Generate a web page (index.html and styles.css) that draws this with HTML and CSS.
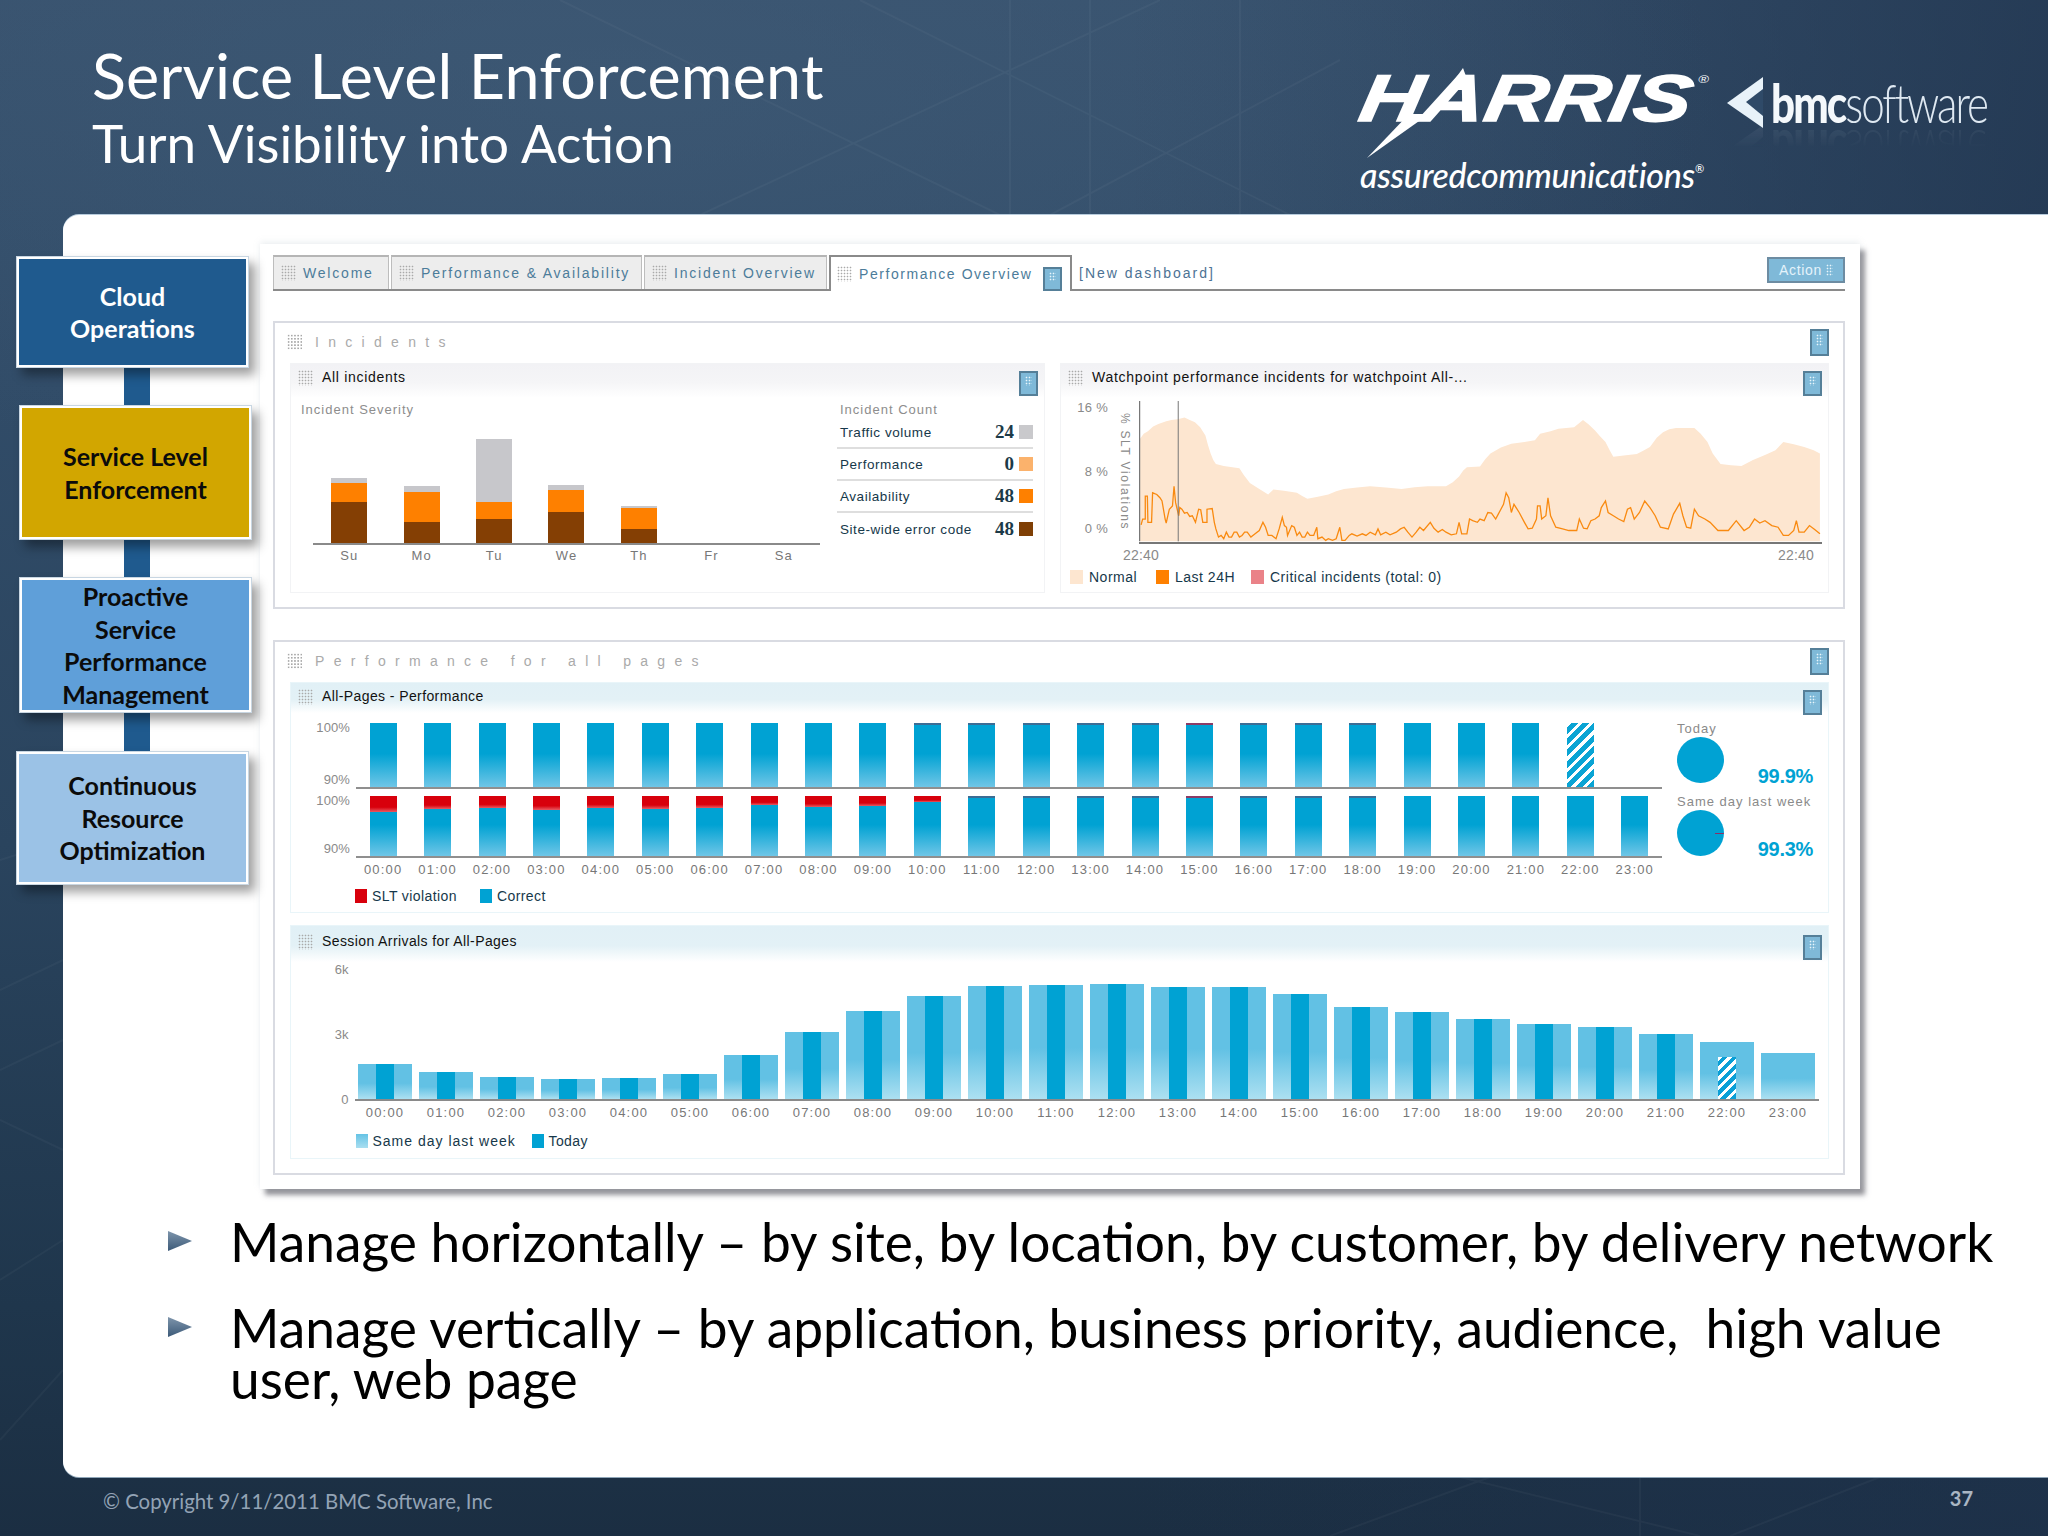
FILE: index.html
```html
<!DOCTYPE html>
<html lang="en">
<head>
<meta charset="utf-8">
<title>Service Level Enforcement</title>
<link rel="stylesheet" href="styles.css">
</head>
<body>
<div class="slide">
  <svg class="texture" viewBox="0 0 2048 1536" aria-hidden="true">
    <g fill="none" stroke="#fff" stroke-opacity=".035" stroke-width="2">
      <path d="M700 215L1160 0M860 0L1290 215M1050 215L1340 60M560 0L1000 215M1010 0V215M1090 0V215M1240 0V215"/>
      <path d="M0 860L63 840M0 990L63 960M0 1070L63 1040M0 1120L63 1150M0 1280L63 1240M0 1440L63 1370"/>
      <path d="M1330 1536L1490 1477M1460 1477L1700 1536M1640 1477V1536M1730 1536L1880 1477"/>
    </g>
  </svg>

  <header class="header">
    <div class="titles">
      <h1 class="title">Service Level Enforcement</h1>
      <p class="subtitle">Turn Visibility into Action</p>
    </div>
    <div class="logos">
      <div class="harris">
        <div class="harris-word">HARRIS<sup class="reg">®</sup></div>
        <svg class="bolt" viewBox="0 0 110 98" aria-hidden="true"><polygon points="0,98 42,54 62,54" fill="#fff"/><polygon points="96,8 80,30 104,30" fill="#fff"/></svg>
        <div class="assured">assuredcommunications<sup class="reg-small">®</sup></div>
      </div>
      <div class="bmc">
        <svg class="bmc-mark" viewBox="0 0 36 51" aria-hidden="true"><polygon points="0,26 36,0 36,51" fill="#e8f2f9"/><polygon points="19,25 36,12 36,39" fill="#2f4a68"/></svg>
        <div class="bmc-word"><b>bmc</b>software</div>
      </div>
    </div>
  </header>

  <main class="panel">
    <div class="top-row">
      <nav class="stack">
        <div class="step step-cloud"><span>Cloud<br>Operations</span></div>
        <div class="link link-a"></div>
        <div class="step step-sle step-in"><span>Service Level<br>Enforcement</span></div>
        <div class="link link-a"></div>
        <div class="step step-psp step-in"><span>Proactive<br>Service<br>Performance<br>Management</span></div>
        <div class="link link-b"></div>
        <div class="step step-cro"><span>Continuous<br>Resource<br>Optimization</span></div>
      </nav>

      <section class="card">
        <div class="tabs">
          <div class="tab t1"><i class="grip"></i>Welcome</div>
          <div class="tab t2"><i class="grip"></i>Performance &amp; Availability</div>
          <div class="tab t3"><i class="grip"></i>Incident Overview</div>
          <div class="tab tab-on"><i class="grip"></i>Performance Overview<i class="menu menu-tab"></i></div>
          <div class="newdash">[New dashboard]</div>
          <div class="action">Action<i class="action-grip"></i></div>
        </div>

        <section class="box box-inc">
          <div class="box-title"><i class="grip grip-big"></i><span>Incidents</span><i class="menu menu-box"></i></div>
          <div class="sub-row">
            <article class="sub sub-all">
              <div class="sub-head"><i class="grip"></i><span>All incidents</span><i class="menu"></i></div>
              <div class="all-body">
                <div class="sev">
                  <div class="cap-label">Incident Severity</div>
                  <div class="sev-plot">
                    <div class="sev-bar"><i class="sg" style="height:5px"></i><i class="so" style="height:19px"></i><i class="sb" style="height:41px"></i></div>
                    <div class="sev-bar"><i class="sg" style="height:6px"></i><i class="so" style="height:30px"></i><i class="sb" style="height:21px"></i></div>
                    <div class="sev-bar"><i class="sg" style="height:63px"></i><i class="so" style="height:17px"></i><i class="sb" style="height:24px"></i></div>
                    <div class="sev-bar"><i class="sg" style="height:5px"></i><i class="so" style="height:22px"></i><i class="sb" style="height:31px"></i></div>
                    <div class="sev-bar"><i class="sg" style="height:2px"></i><i class="so" style="height:21px"></i><i class="sb" style="height:14px"></i></div>
                    <div class="sev-bar"></div>
                    <div class="sev-bar"></div>
                  </div>
                  <div class="sev-days"><span>Su</span><span>Mo</span><span>Tu</span><span>We</span><span>Th</span><span>Fr</span><span>Sa</span></div>
                </div>
                <div class="count">
                  <div class="cap-label cap-count">Incident Count</div>
                  <div class="count-row"><span>Traffic volume</span><b>24</b><i class="sq sq-g"></i></div>
                  <div class="count-row"><span>Performance</span><b>0</b><i class="sq sq-l"></i></div>
                  <div class="count-row"><span>Availability</span><b>48</b><i class="sq sq-o"></i></div>
                  <div class="count-row"><span>Site-wide error code</span><b>48</b><i class="sq sq-b"></i></div>
                </div>
              </div>
            </article>

            <article class="sub sub-watch">
              <div class="sub-head"><i class="grip"></i><span>Watchpoint performance incidents for watchpoint All-...</span><i class="menu"></i></div>
              <div class="watch-body">
                <div class="watch-y"><span>16 %</span><span>8 %</span><span>0 %</span></div>
                <div class="watch-rot">% SLT Violations</div>
                <div class="watch-plot">
                  <svg class="watch-svg" viewBox="188 240 1306 430" preserveAspectRatio="none" aria-hidden="true">
                    <polygon fill="#fde6d0" points="190,355 197,340 205,332 215,318 225,310 240,302 250,298 262,296 275,290 285,298 295,305 305,320 315,345 320,375 325,400 330,420 335,432 350,438 380,445 388,465 400,490 415,505 435,525 445,510 465,514 490,520 500,530 510,538 530,532 550,525 565,515 580,508 605,504 630,500 660,504 690,508 715,503 740,500 775,500 788,488 800,470 808,452 815,442 840,440 850,418 860,400 880,382 900,370 925,365 945,360 955,340 975,332 990,325 1020,320 1037,298 1048,312 1060,330 1070,348 1080,365 1088,390 1095,410 1115,406 1140,402 1152,392 1165,380 1178,352 1190,335 1202,326 1215,322 1250,322 1262,340 1275,365 1285,400 1300,432 1320,436 1340,438 1362,420 1385,405 1405,390 1420,365 1440,372 1460,380 1478,390 1490,400 1490,668 190,668"/>
                    <polyline fill="none" stroke="#f98a10" stroke-width="1.3" vector-effect="non-scaling-stroke" points="192,618 195,600 200,600 200,530 204,530 205,610 212,610 214,520 222,525 228,535 232,545 238,600 240,612 246,570 252,560 255,500 258,550 264,590 266,565 270,570 275,582 280,580 285,592 290,590 296,610 302,570 306,572 310,610 318,610 318,570 328,568 332,610 335,630 340,655 345,650 350,660 355,640 360,655 365,655 370,640 375,640 380,655 385,650 390,640 395,640 402,655 410,645 418,635 425,610 430,625 435,650 442,650 450,660 456,630 462,595 466,620 470,625 472,650 480,620 485,625 490,650 495,640 500,655 505,655 510,640 515,650 522,650 528,625 530,660 538,655 545,665 550,660 558,665 565,660 572,625 576,665 582,665 590,650 595,645 605,652 615,645 622,650 630,640 640,648 645,630 650,648 660,640 668,648 680,640 688,630 695,625 702,640 710,655 718,640 725,625 732,635 745,610 752,628 760,640 768,632 775,640 785,648 795,645 800,610 805,645 815,645 820,600 826,605 835,610 840,600 848,605 855,580 862,582 870,600 875,585 880,570 885,555 890,520 895,535 900,580 905,555 915,580 925,610 932,630 940,628 948,600 950,560 955,560 958,600 966,590 970,535 975,590 985,625 998,630 1010,635 1025,635 1030,600 1038,628 1045,630 1052,605 1060,600 1068,590 1072,565 1080,545 1085,580 1095,590 1105,600 1115,608 1122,570 1128,565 1135,600 1145,580 1155,545 1165,565 1175,590 1185,625 1200,630 1210,585 1222,552 1228,590 1235,625 1243,628 1250,570 1258,590 1270,600 1280,610 1295,635 1315,635 1330,605 1345,635 1355,625 1365,600 1375,612 1385,605 1398,620 1410,625 1420,650 1430,650 1440,635 1445,605 1450,640 1460,640 1470,620 1480,632 1490,645"/>
                    <line x1="263" y1="240" x2="263" y2="668" stroke="#777" stroke-width="1" vector-effect="non-scaling-stroke"/>
                    <line x1="189" y1="240" x2="189" y2="668" stroke="#777" stroke-width="1.4" vector-effect="non-scaling-stroke"/>
                  </svg>
                  <div class="watch-times"><span>22:40</span><span>22:40</span></div>
                </div>
                <div class="watch-legend">
                  <i class="lg lg-n"></i><span class="lgt-n">Normal</span>
                  <i class="lg lg-l"></i><span class="lgt-l">Last 24H</span>
                  <i class="lg lg-c"></i><span>Critical incidents (total: 0)</span>
                </div>
              </div>
            </article>
          </div>
        </section>

        <section class="box box-perf">
          <div class="box-title"><i class="grip grip-big"></i><span>Performance for all pages</span><i class="menu menu-box"></i></div>

          <article class="sub sub-blue sub-perf">
            <div class="sub-head head-blue"><i class="grip"></i><span>All-Pages - Performance</span><i class="menu"></i></div>
            <div class="perf-body">
              <div class="perf-left">
                <div class="perf-chart perf-chart-1">
                  <div class="y2"><span>100%</span><span>90%</span></div>
                  <div class="pbars">
                    <div class="pbar"></div><div class="pbar"></div><div class="pbar"></div><div class="pbar"></div><div class="pbar"></div><div class="pbar"></div>
                    <div class="pbar"></div><div class="pbar"></div><div class="pbar"></div><div class="pbar"></div>
                    <div class="pbar"><i class="dark"></i></div><div class="pbar"><i class="dark"></i></div><div class="pbar"><i class="dark"></i></div><div class="pbar"><i class="dark"></i></div><div class="pbar"><i class="dark"></i></div>
                    <div class="pbar"><i class="dark dark-r"></i></div><div class="pbar"><i class="dark"></i></div><div class="pbar"><i class="dark"></i></div><div class="pbar"><i class="dark"></i></div>
                    <div class="pbar"></div><div class="pbar"></div><div class="pbar"></div>
                    <div class="pbar hatch"></div><div class="pbar-none"></div>
                  </div>
                </div>
                <div class="perf-chart perf-chart-2">
                  <div class="y2"><span>100%</span><span>90%</span></div>
                  <div class="pbars">
                    <div class="pbar"><i class="viol" style="height:16px"></i></div><div class="pbar"><i class="viol" style="height:13px"></i></div><div class="pbar"><i class="viol" style="height:12px"></i></div><div class="pbar"><i class="viol" style="height:14px"></i></div><div class="pbar"><i class="viol" style="height:12px"></i></div><div class="pbar"><i class="viol" style="height:13px"></i></div>
                    <div class="pbar"><i class="viol" style="height:12px"></i></div><div class="pbar"><i class="viol" style="height:9px"></i></div><div class="pbar"><i class="viol" style="height:11px"></i></div><div class="pbar"><i class="viol" style="height:10px"></i></div><div class="pbar"><i class="viol" style="height:6px"></i></div>
                    <div class="pbar"><i class="dark"></i></div><div class="pbar"><i class="dark"></i></div><div class="pbar"><i class="dark"></i></div><div class="pbar"><i class="dark"></i></div>
                    <div class="pbar"><i class="dark dark-r"></i></div><div class="pbar"><i class="dark"></i></div><div class="pbar"><i class="dark"></i></div><div class="pbar"><i class="dark"></i></div>
                    <div class="pbar"></div><div class="pbar"></div><div class="pbar"></div><div class="pbar"></div><div class="pbar"></div>
                  </div>
                </div>
                <div class="hours hours-p">
                  <span>00:00</span><span>01:00</span><span>02:00</span><span>03:00</span><span>04:00</span><span>05:00</span><span>06:00</span><span>07:00</span><span>08:00</span><span>09:00</span><span>10:00</span><span>11:00</span><span>12:00</span><span>13:00</span><span>14:00</span><span>15:00</span><span>16:00</span><span>17:00</span><span>18:00</span><span>19:00</span><span>20:00</span><span>21:00</span><span>22:00</span><span>23:00</span>
                </div>
                <div class="legend legend-p"><i class="lg lg-red"></i><span class="lgt-slt">SLT violation</span><i class="lg lg-cor"></i><span>Correct</span></div>
              </div>
              <div class="pies">
                <div class="pie-block">
                  <div class="pie-title">Today</div>
                  <div class="pie-row"><div class="pie"></div><div class="pie-val">99.9%</div></div>
                </div>
                <div class="pie-block pie-block-2">
                  <div class="pie-title">Same day last week</div>
                  <div class="pie-row"><div class="pie pie-w"></div><div class="pie-val">99.3%</div></div>
                </div>
              </div>
            </div>
          </article>

          <article class="sub sub-blue sub-sess">
            <div class="sub-head head-blue head-sess"><i class="grip"></i><span>Session Arrivals for All-Pages</span><i class="menu"></i></div>
            <div class="sess-body">
              <div class="y3"><span>6k</span><span>3k</span><span>0</span></div>
              <div class="sess-main">
                <div class="sbars">
                  <div class="sbar" style="height:35px"><i class="st"></i></div>
                  <div class="sbar" style="height:27px"><i class="st"></i></div>
                  <div class="sbar" style="height:22px"><i class="st"></i></div>
                  <div class="sbar" style="height:20px"><i class="st"></i></div>
                  <div class="sbar" style="height:21px"><i class="st"></i></div>
                  <div class="sbar" style="height:25px"><i class="st"></i></div>
                  <div class="sbar" style="height:44px"><i class="st"></i></div>
                  <div class="sbar" style="height:67px"><i class="st"></i></div>
                  <div class="sbar" style="height:88px"><i class="st"></i></div>
                  <div class="sbar" style="height:103px"><i class="st"></i></div>
                  <div class="sbar" style="height:113px"><i class="st"></i></div>
                  <div class="sbar" style="height:114px"><i class="st"></i></div>
                  <div class="sbar" style="height:115px"><i class="st"></i></div>
                  <div class="sbar" style="height:112px"><i class="st"></i></div>
                  <div class="sbar" style="height:112px"><i class="st"></i></div>
                  <div class="sbar" style="height:105px"><i class="st"></i></div>
                  <div class="sbar" style="height:92px"><i class="st"></i></div>
                  <div class="sbar" style="height:87px"><i class="st"></i></div>
                  <div class="sbar" style="height:80px"><i class="st"></i></div>
                  <div class="sbar" style="height:75px"><i class="st"></i></div>
                  <div class="sbar" style="height:72px"><i class="st"></i></div>
                  <div class="sbar" style="height:65px"><i class="st"></i></div>
                  <div class="sbar" style="height:57px"><i class="st st-h" style="height:42px"></i></div>
                  <div class="sbar" style="height:46px"></div>
                </div>
                <div class="hours hours-s">
                  <span>00:00</span><span>01:00</span><span>02:00</span><span>03:00</span><span>04:00</span><span>05:00</span><span>06:00</span><span>07:00</span><span>08:00</span><span>09:00</span><span>10:00</span><span>11:00</span><span>12:00</span><span>13:00</span><span>14:00</span><span>15:00</span><span>16:00</span><span>17:00</span><span>18:00</span><span>19:00</span><span>20:00</span><span>21:00</span><span>22:00</span><span>23:00</span>
                </div>
                <div class="legend legend-s"><i class="lg lg-lw"></i><span class="lgt-lw">Same day last week</span><i class="lg lg-cor"></i><span>Today</span></div>
              </div>
            </div>
          </article>
        </section>
      </section>
    </div>

    <ul class="bullets">
      <li>Manage horizontally – by site, by location, by customer, by delivery network</li>
      <li>Manage vertically – by application, business priority, audience,&nbsp; high value user, web page</li>
    </ul>
  </main>

  <footer class="footer">
    <span class="copy">© Copyright 9/11/2011 BMC Software, Inc</span>
    <span class="page">37</span>
  </footer>
</div>
</body>
</html>
```

FILE: styles.css
```css
* { box-sizing: border-box; }
html, body { margin: 0; padding: 0; }
body { width: 2048px; height: 1536px; overflow: hidden; font-family: "Liberation Sans", Arial, sans-serif; }
i { display: block; font-style: normal; }

.slide {
  position: relative;
  width: 2048px;
  height: 1536px;
  overflow: hidden;
  display: flex;
  flex-direction: column;
  background:
    radial-gradient(ellipse 1100px 420px at 620px 80px, rgba(64,92,120,.55) 0%, rgba(64,92,120,0) 100%),
    linear-gradient(90deg, rgba(30,50,76,0) 55%, rgba(30,50,76,.7) 100%),
    linear-gradient(180deg, #38526e 0%, #314c68 25%, #2a445e 55%, #1f364c 85%, #1b2e42 100%);
}
.texture { position: absolute; left: 0; top: 0; width: 2048px; height: 1536px; }

/* Header */
.header {
  position: relative;
  height: 215px;
  flex: none;
  display: flex;
  justify-content: space-between;
  padding: 0 63px 0 92px;
}
.titles { color: #fff; font-family: Lato, sans-serif; }
.title { margin: 39px 0 0; font-size: 62.8px; line-height: 72px; font-weight: 400; white-space: nowrap; letter-spacing: .2px; }
.subtitle { margin: 0; font-size: 53px; line-height: 64px; white-space: nowrap; }

.logos { display: flex; align-items: flex-start; color: #fff; }
.harris { position: relative; width: 345px; padding-top: 65px; }
.harris-word {
  margin-left: -5px;
  font: italic 700 66px/66px "Liberation Sans", sans-serif;
  -webkit-text-stroke: 1.5px #fff;
  transform: skewX(-10deg) scaleX(1.31);
  transform-origin: left bottom;
  white-space: nowrap;
  width: 245px;
}
.reg { font-size: 11px; font-weight: 400; vertical-align: 38px; line-height: 0; margin-left: 2px; -webkit-text-stroke: 0; }
.bolt { position: absolute; left: 7px; top: 60px; width: 110px; height: 98px; }
.assured { margin-top: 26px; font: italic 500 34px/36px Lato, sans-serif; letter-spacing: -.3px; white-space: nowrap; }
.reg-small { font-size: 11px; line-height: 0; vertical-align: 15px; }
.bmc { display: flex; align-items: center; margin-left: 22px; margin-top: 77px; height: 51px; -webkit-box-reflect: below -3px linear-gradient(transparent 55%, rgba(255,255,255,.08)); }
.bmc-mark { width: 36px; height: 51px; flex: none; }
.bmc-word { margin-left: 8px; font: 300 54px/46px Lato, sans-serif; color: #dfe9f2; letter-spacing: -2.6px; transform: scaleX(.78); transform-origin: left center; width: 214px; white-space: nowrap; }
.bmc-word b { font-weight: 900; color: #f4f8fb; letter-spacing: -2.4px; }

/* White panel */
.panel {
  position: relative;
  flex: none;
  height: 1262px;
  margin-left: 63px;
  padding-top: 29px;
  background: #fff;
  border-radius: 16px 0 0 16px;
  box-shadow: 0 -1px 0 #b7cbdc, 0 1px 0 #8fa6b8;
}
.top-row { display: flex; align-items: flex-start; margin-left: -47px; }

/* Process stack */
.stack { width: 236px; margin-top: 12px; flex: none; }
.step {
  width: 233px;
  display: flex;
  align-items: center;
  justify-content: center;
  text-align: center;
  font: 700 25px/32.5px Lato, sans-serif;
  border: 3px solid #fff;
  outline: 1px solid #c8d6e2;
  outline-offset: -1px;
  box-shadow: 6px 7px 10px rgba(0,0,0,.38);
  position: relative;
  z-index: 1;
}
.step-in { margin-left: 3px; }
.step-cloud { height: 112px; background: #1f5a8e; color: #fff; }
.step-sle { height: 135px; background: #d2a600; color: #0b0b0b; }
.step-psp { height: 136px; background: #5f9fd9; color: #0b0b0b; }
.step-cro { height: 134px; background: #9bc2e6; color: #0b0b0b; }
.link { width: 26px; margin-left: 108px; background: #1f5a8e; }
.link-a { height: 37px; }
.link-b { height: 38px; }

/* Screenshot card */
.card {
  width: 1600px;
  height: 945px;
  margin-left: 8px;
  flex: none;
  padding: 11px 15px 0 13px;
  background: #fff;
  box-shadow: 0 -2px 6px rgba(180,190,200,.25), 5px 6px 5px rgba(90,90,100,.65);
  font-size: 14px;
}
.tabs { display: flex; align-items: stretch; height: 36px; border-bottom: 2px solid #8a8a8a; }
.tab {
  display: flex;
  align-items: center;
  gap: 7px;
  padding-left: 7px;
  background: #ededed;
  border: 1px solid #bdbdbd;
  border-top: 2px solid #b5b5b5;
  border-bottom: 0;
  color: #4c7c9a;
  letter-spacing: 1.8px;
  white-space: nowrap;
  margin-right: 2px;
  font-size: 14px;
}
.t1 { width: 116px; }
.t2 { width: 251px; }
.t3 { width: 183px; }
.tab-on { width: 243px; height: 36px; background: #fff; border: 2px solid #8a8a8a; border-bottom: 0; padding-left: 6px; position: relative; margin-right: 7px; z-index: 1; letter-spacing: 1.55px; }
.grip {
  width: 15px;
  height: 16px;
  flex: none;
  background: radial-gradient(circle, #a9a9a9 .7px, rgba(169,169,169,0) 1.1px) 0 0/3px 3px;
}
.grip-big { height: 16px; width: 15px; background-size: 3.2px 3.2px; }
.menu {
  width: 19px;
  height: 25px;
  flex: none;
  margin-left: auto;
  border: 2px solid #557f98;
  padding: 3px 4px 8px;
  background: radial-gradient(circle, #eaf6fc .7px, rgba(234,246,252,0) 1.1px) 0 0/3px 3px content-box, #7fb9d8;
}
.menu-tab { margin-left: auto; margin-right: 8px; align-self: flex-end; height: 24px; }
.newdash { align-self: center; margin-top: 2px; color: #4c7294; letter-spacing: 2px; font-size: 14px; white-space: nowrap; }
.action {
  margin: 2px 0 6px auto;
  width: 78px;
  display: flex;
  align-items: center;
  justify-content: center;
  gap: 4px;
  background: #7fb9d8;
  border: 2px solid #6d8ca2;
  color: #e4f3fb;
  font-size: 14px;
  letter-spacing: .7px;
}
.action-grip { width: 7px; height: 12px; background: radial-gradient(circle, #eaf6fc .7px, rgba(234,246,252,0) 1.1px) 0 0/3px 3px; }

/* Boxes */
.box { border: 2px solid #d9dbe2; padding: 0 14px 14px 15px; }
.box-inc { margin-top: 30px; height: 288px; }
.box-perf { margin-top: 31px; height: 535px; }
.box-title { height: 40px; display: flex; align-items: flex-start; padding-top: 11px; color: #aaa; font-size: 14px; line-height: 16px; letter-spacing: 9.3px; white-space: nowrap; margin-left: -3px; }
.box-title .grip { margin-right: 13px; }
.box-title span { font-family: "Liberation Sans", sans-serif; }
.menu-box { margin-right: 0; margin-top: -5px; margin-left: auto; height: 27px; }
.sub-row { display: flex; gap: 15px; }
.sub { border: 1px solid #f2f3f5; background: #fff; }
.sub-all { width: 755px; height: 230px; }
.sub-watch { width: 769px; height: 230px; }
.sub-head {
  height: 34px;
  display: flex;
  align-items: flex-start;
  gap: 9px;
  padding: 7px 6px 0 7px;
  background: linear-gradient(#f2f2f5 0%, #f5f5f7 55%, #fff 100%);
  color: #111;
  font-size: 14px;
  line-height: 14px;
  white-space: nowrap;
  letter-spacing: .7px;
}
.sub-head .grip, .sub-head span { margin-top: -1px; }
.all-body { display: flex; }
.cap-label { color: #8d8d8d; font-size: 13px; line-height: 14px; letter-spacing: 1px; white-space: nowrap; }
.sev { width: 546px; padding-top: 5px; }
.sev .cap-label { margin-left: 10px; }
.sev-plot {
  margin: 2px 0 0 22px;
  width: 507px;
  height: 126px;
  display: grid;
  grid-template-columns: repeat(7, 1fr);
  justify-items: center;
  align-items: end;
  border-bottom: 2px solid #8a8a8a;
}
.sev-bar { width: 36px; display: flex; flex-direction: column; }
.sg { background: #c7c7cb; }
.so { background: #fe8000; }
.sb { background: #843f04; }
.sev-days { margin: 3px 0 0 22px; width: 507px; display: grid; grid-template-columns: repeat(7, 1fr); justify-items: center; color: #777; font-size: 13px; line-height: 16px; letter-spacing: 1px; }
.count { width: 196px; padding-top: 5px; }
.cap-count { margin-left: 3px; }
.count-row { height: 32px; display: flex; align-items: center; padding-left: 3px; border-bottom: 2px solid #dedede; color: #16384a; font-size: 13.5px; letter-spacing: .55px; white-space: nowrap; }
.count-row:last-child { border-bottom: 0; }
.count-row b { margin-left: auto; font: 700 19px "Liberation Serif", serif; color: #1c3a48; letter-spacing: 0; }
.sq { width: 14px; height: 14px; margin-left: 5px; }
.sq-g { background: #c9c9cc; }
.sq-l { background: #fbb26c; }
.sq-o { background: #fe8000; }
.sq-b { background: #7f3f05; }

.watch-body {
  display: grid;
  grid-template-columns: 47px 31px 683px;
  grid-template-rows: 143px 1fr;
  padding-top: 3px;
}
.watch-y { display: flex; flex-direction: column; align-items: flex-end; color: #8a8a8a; font-size: 13px; line-height: 14px; letter-spacing: .3px; }
.watch-y span:nth-child(2) { margin-top: 50px; }
.watch-y span:nth-child(3) { margin-top: 43px; }
.watch-rot { writing-mode: vertical-rl; justify-self: center; margin: 12px 0 0 3px; color: #8a8a8a; font-size: 12px; line-height: 14px; letter-spacing: 1.7px; white-space: nowrap; }
.watch-plot { grid-row: 1 / span 1; grid-column: 3; }
.watch-svg { display: block; width: 683px; height: 143px; border-bottom: 2px solid #777; }
.watch-times { display: flex; justify-content: space-between; margin-top: 4px; padding: 0 4px 0 0; margin-left: -16px; width: 695px; color: #8a8a8a; font-size: 14px; line-height: 14px; letter-spacing: .2px; }
.watch-legend { grid-column: 1 / -1; display: flex; align-items: center; margin: 25px 0 0 9px; color: #16384a; font-size: 14px; letter-spacing: .5px; white-space: nowrap; }
.lg { width: 13px; height: 14px; flex: none; margin-right: 6px; }
.lg-n { background: #fde6d0; }
.lg-l { background: #fe8000; }
.lg-c { background: #ea8288; margin-right: 6px; }
.lgt-n { width: 67px; }
.lgt-l { width: 76px; }

/* Performance */
.sub-blue { border-color: #e9f5f9; }
.head-blue { background: linear-gradient(#e1f0f6 0%, #e3f1f6 55%, #fff 100%); letter-spacing: .4px; }
.sub-perf { height: 231px; }
.sub-perf .sub-head { height: 30px; }
.perf-body { display: flex; padding-top: 10px; }
.perf-left { width: 1371px; }
.perf-chart { display: flex; align-items: flex-start; }
.perf-chart-1 .pbars { height: 66px; }
.perf-chart-2 { margin-top: 7px; }
.perf-chart-2 .pbars { height: 62px; }
.y2 { width: 65px; margin-top: -2px; padding-right: 6px; display: flex; flex-direction: column; justify-content: space-between; align-items: flex-end; color: #8a8a8a; font-size: 13px; line-height: 14px; letter-spacing: .1px; }
.perf-chart-1 .y2 { height: 66px; }
.perf-chart-2 .y2 { height: 62px; }
.pbars { flex: none; width: 1306px; display: grid; grid-template-columns: repeat(24, 1fr); justify-items: center; border-bottom: 2px solid #8f8f8f; }
.pbar { width: 27px; display: flex; flex-direction: column; background: linear-gradient(#00a2d3 0%, #00a2d3 48%, #6fc6e7 100%); }
.pbar-none { width: 27px; }
.hatch { background: repeating-linear-gradient(135deg, #fff 0 3px, #0aa4d4 3px 8px); }
.dark { height: 2px; background: #3c6d95; }
.dark-r { background: #8b3c66; }
.viol { background: linear-gradient(#d8000c 0%, #d8000c 70%, #e85a62 100%); }
.hours { display: grid; justify-items: center; color: #777; font-size: 13px; line-height: 14px; letter-spacing: 1.2px; white-space: nowrap; }
.hours-p { grid-template-columns: repeat(24, 1fr); width: 1306px; margin: 5px 0 0 65px; }
.legend { display: flex; align-items: center; color: #16384a; font-size: 14px; line-height: 14px; letter-spacing: .4px; white-space: nowrap; }
.legend-p { margin: 12px 0 0 64px; }
.lg-red { background: #d8000c; width: 12px; margin-right: 5px; }
.lg-cor { background: #00a2d3; width: 12px; margin-right: 5px; }
.lgt-slt { width: 108px; }
.lg-lw { background: linear-gradient(#65c3e5, #a9def0); width: 12px; margin-right: 5px; }
.lgt-lw { width: 159px; letter-spacing: 1px; }

.pies { width: 136px; margin-left: 15px; margin-top: -1px; }
.pie-block-2 { margin-top: 12px; }
.pie-title { color: #8a8a8a; font-size: 13px; line-height: 14px; letter-spacing: 1px; white-space: nowrap; }
.pie-row { display: flex; margin-top: 1px; }
.pie { width: 47px; height: 46px; border-radius: 50%; background: #00a2d3; flex: none; }
.pie-w { background: conic-gradient(#00a2d3 0 89deg, #8b2f66 89deg 92deg, #00a2d3 92deg); }
.pie-val { margin-left: auto; align-self: flex-end; margin-bottom: -3px; color: #00a2d3; font-size: 20px; line-height: 20px; font-weight: 700; letter-spacing: -.3px; }

/* Sessions */
.sub-sess { margin-top: 12px; height: 234px; }
.head-sess { height: 36px; padding-top: 9px; }
.sess-body { display: flex; padding-top: 0; }
.y3 { width: 63.5px; height: 144px; margin-top: 1px; padding-right: 6px; display: flex; flex-direction: column; justify-content: space-between; align-items: flex-end; color: #8a8a8a; font-size: 13px; line-height: 14px; }
.sess-main { width: 1464px; margin-top: 6px; }
.sbars { height: 133px; display: grid; grid-template-columns: repeat(24, 1fr); justify-items: center; align-items: end; border-bottom: 2px solid #8a8a8a; }
.sbar { width: 54px; display: flex; justify-content: center; align-items: flex-end; background: linear-gradient(#62c1e4 0%, #62c1e4 55%, #ace0f1 100%); }
.st { width: 18px; height: 100%; background: #00a2d3; }
.st-h { background: repeating-linear-gradient(135deg, #fff 0 3px, #0a9fd6 3px 7px); }
.hours-s { grid-template-columns: repeat(24, 1fr); width: 1464px; margin-top: 5px; }
.legend-s { margin: 14px 0 0 1px; }

/* Bullets */
.bullets { list-style: none; margin: 27px 0 0; padding: 0 0 0 167px; font-family: Lato, sans-serif; color: #000; }
.bullets li { font-size: 53.3px; line-height: 51px; position: relative; white-space: normal; width: 1790px; margin-bottom: 35px; }
.bullets li::before {
  content: "";
  position: absolute;
  left: -62px;
  top: 15px;
  width: 24px;
  height: 20px;
  clip-path: polygon(0 0, 100% 50%, 0 100%);
  background: linear-gradient(#7e95ac, #3c5a78);
}

/* Footer */
.footer { position: relative; flex: 1; display: flex; justify-content: space-between; padding: 10px 75px 0 103px; font-family: Lato, sans-serif; }
.copy { color: #93a3b5; font-size: 20.4px; line-height: 28px; }
.page { color: #a9b6c4; font-size: 20px; font-weight: 700; line-height: 22px; }
```
